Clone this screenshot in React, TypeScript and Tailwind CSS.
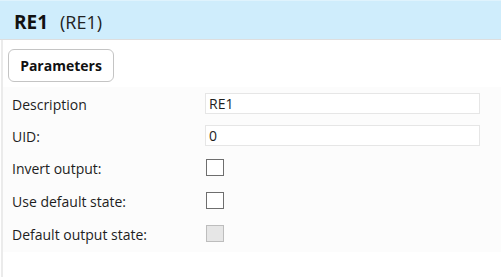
import React from 'react';

const font = { fontFamily: '"Open Sans", "Noto Sans", sans-serif' };

const TextRow: React.FC<{ label: string; value: string; h: string }> = ({ label, value, h }) => (
  <div className={`flex items-center ${h}`}>
    <div className="w-[202px] pl-[9px] pt-[3px] text-[14px] text-[#1e1e1e]">{label}</div>
    <div className="w-[275px] h-[21px] border border-[#e6e6e6] bg-white flex items-center pl-[3px] text-[14px] text-[#1e1e1e]">
      {value}
    </div>
  </div>
);

const CheckRow: React.FC<{ label: string; disabled?: boolean; h: string }> = ({ label, disabled = false, h }) => (
  <div className={`flex items-center ${h}`}>
    <div className="w-[203px] pl-[9px] pt-[2px] text-[14px] text-[#1e1e1e]">{label}</div>
    <div
      className={`w-[18px] h-[17px] border-[1.5px] ${
        disabled ? 'border-[#bdbdbd] bg-[#e6e6e6]' : 'border-[#6e6e6e] bg-white'
      }`}
    />
  </div>
);

export default function App() {
  return (
    <div className="w-[501px] h-[277px] bg-white overflow-hidden" style={font}>
      <div className="h-[40px] bg-[#cfedfc] border-b border-[#dedede] flex items-center pl-[14px] pt-[4px] gap-[12px] border-t border-t-[#dff3fd]">
        <span className="text-[19px] font-bold text-[#111]">RE1</span>
        <span className="text-[18px] text-[#222]">(RE1)</span>
      </div>
      <div className="ml-px border-l-2 border-[#ebebeb] h-[237px]">
        <div className="pt-[9px] pl-[5px]">
          <button className="w-[106px] h-[33px] rounded-[6px] border border-[#c4c4c4] bg-white text-[14px] font-bold text-[#111]">
            Parameters
          </button>
        </div>
        <div className="mt-[5px] bg-[#fcfcfc] pb-[2px]">
          <TextRow label="Description" value="RE1" h="h-8" />
          <TextRow label="UID:" value="0" h="h-8" />
          <CheckRow label="Invert output:" h="h-[33px]" />
          <CheckRow label="Use default state:" h="h-[33px]" />
          <CheckRow label="Default output state:" disabled h="h-[33px]" />
        </div>
      </div>
    </div>
  );
}
